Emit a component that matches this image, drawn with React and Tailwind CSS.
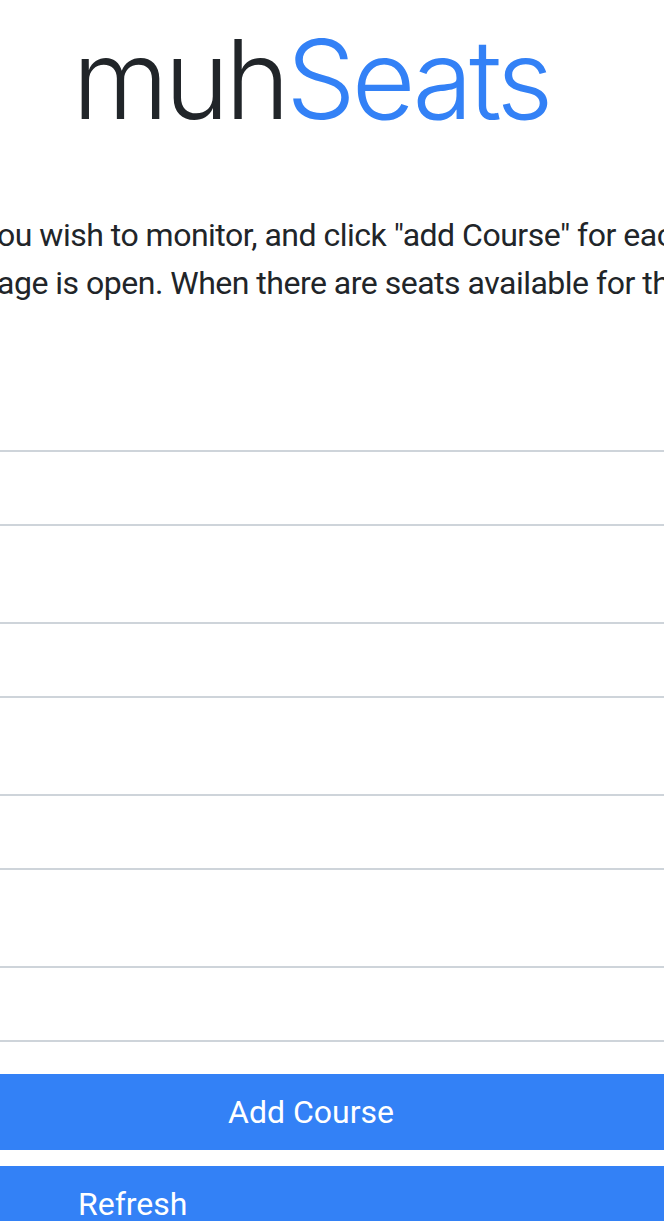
import React, { useState } from "react";

export default function App() {
  const [courses, setCourses] = useState(["", "", "", ""]);

  const update = (i, v) => {
    const next = [...courses];
    next[i] = v;
    setCourses(next);
  };

  return (
    <div className="w-[664px] h-[1221px] overflow-hidden bg-white font-['Roboto','Liberation_Sans',sans-serif] text-[#212529]">
      <div className="w-[900px] ml-[-139px]">
        {/* Title */}
        <h1 className="pt-[12px] text-center font-['Inter',sans-serif] text-[110px] leading-[134px] font-light tracking-[-4px]">
          muh<span className="text-[#3381f6]">Seats</span>
        </h1>

        {/* Intro text, runs past both edges */}
        <div className="mt-[65px] pl-[136px] text-[32px] leading-[48px] tracking-[-0.5px] whitespace-nowrap">
          <p>ou wish to monitor, and click "add Course" for each course.</p>
          <p>age is open. When there are seats available for the course,</p>
        </div>

        {/* Course inputs */}
        <div className="mt-[143px] flex flex-col gap-[96px]">
          {courses.map((c, i) => (
            <input
              key={i}
              type="text"
              value={c}
              onChange={(e) => update(i, e.target.value)}
              className="w-full h-[76px] border-2 border-[#ced4da] px-6 text-[32px] focus:outline-none"
            />
          ))}
        </div>

        {/* Buttons */}
        <button className="mt-[32px] w-full h-[76px] bg-[#3381f6] text-white text-[32px]">
          Add Course
        </button>
        <button className="mt-[16px] w-full h-[76px] bg-[#3381f6] text-white text-[32px] text-left pl-[217px]">
          Refresh
        </button>
      </div>
    </div>
  );
}
